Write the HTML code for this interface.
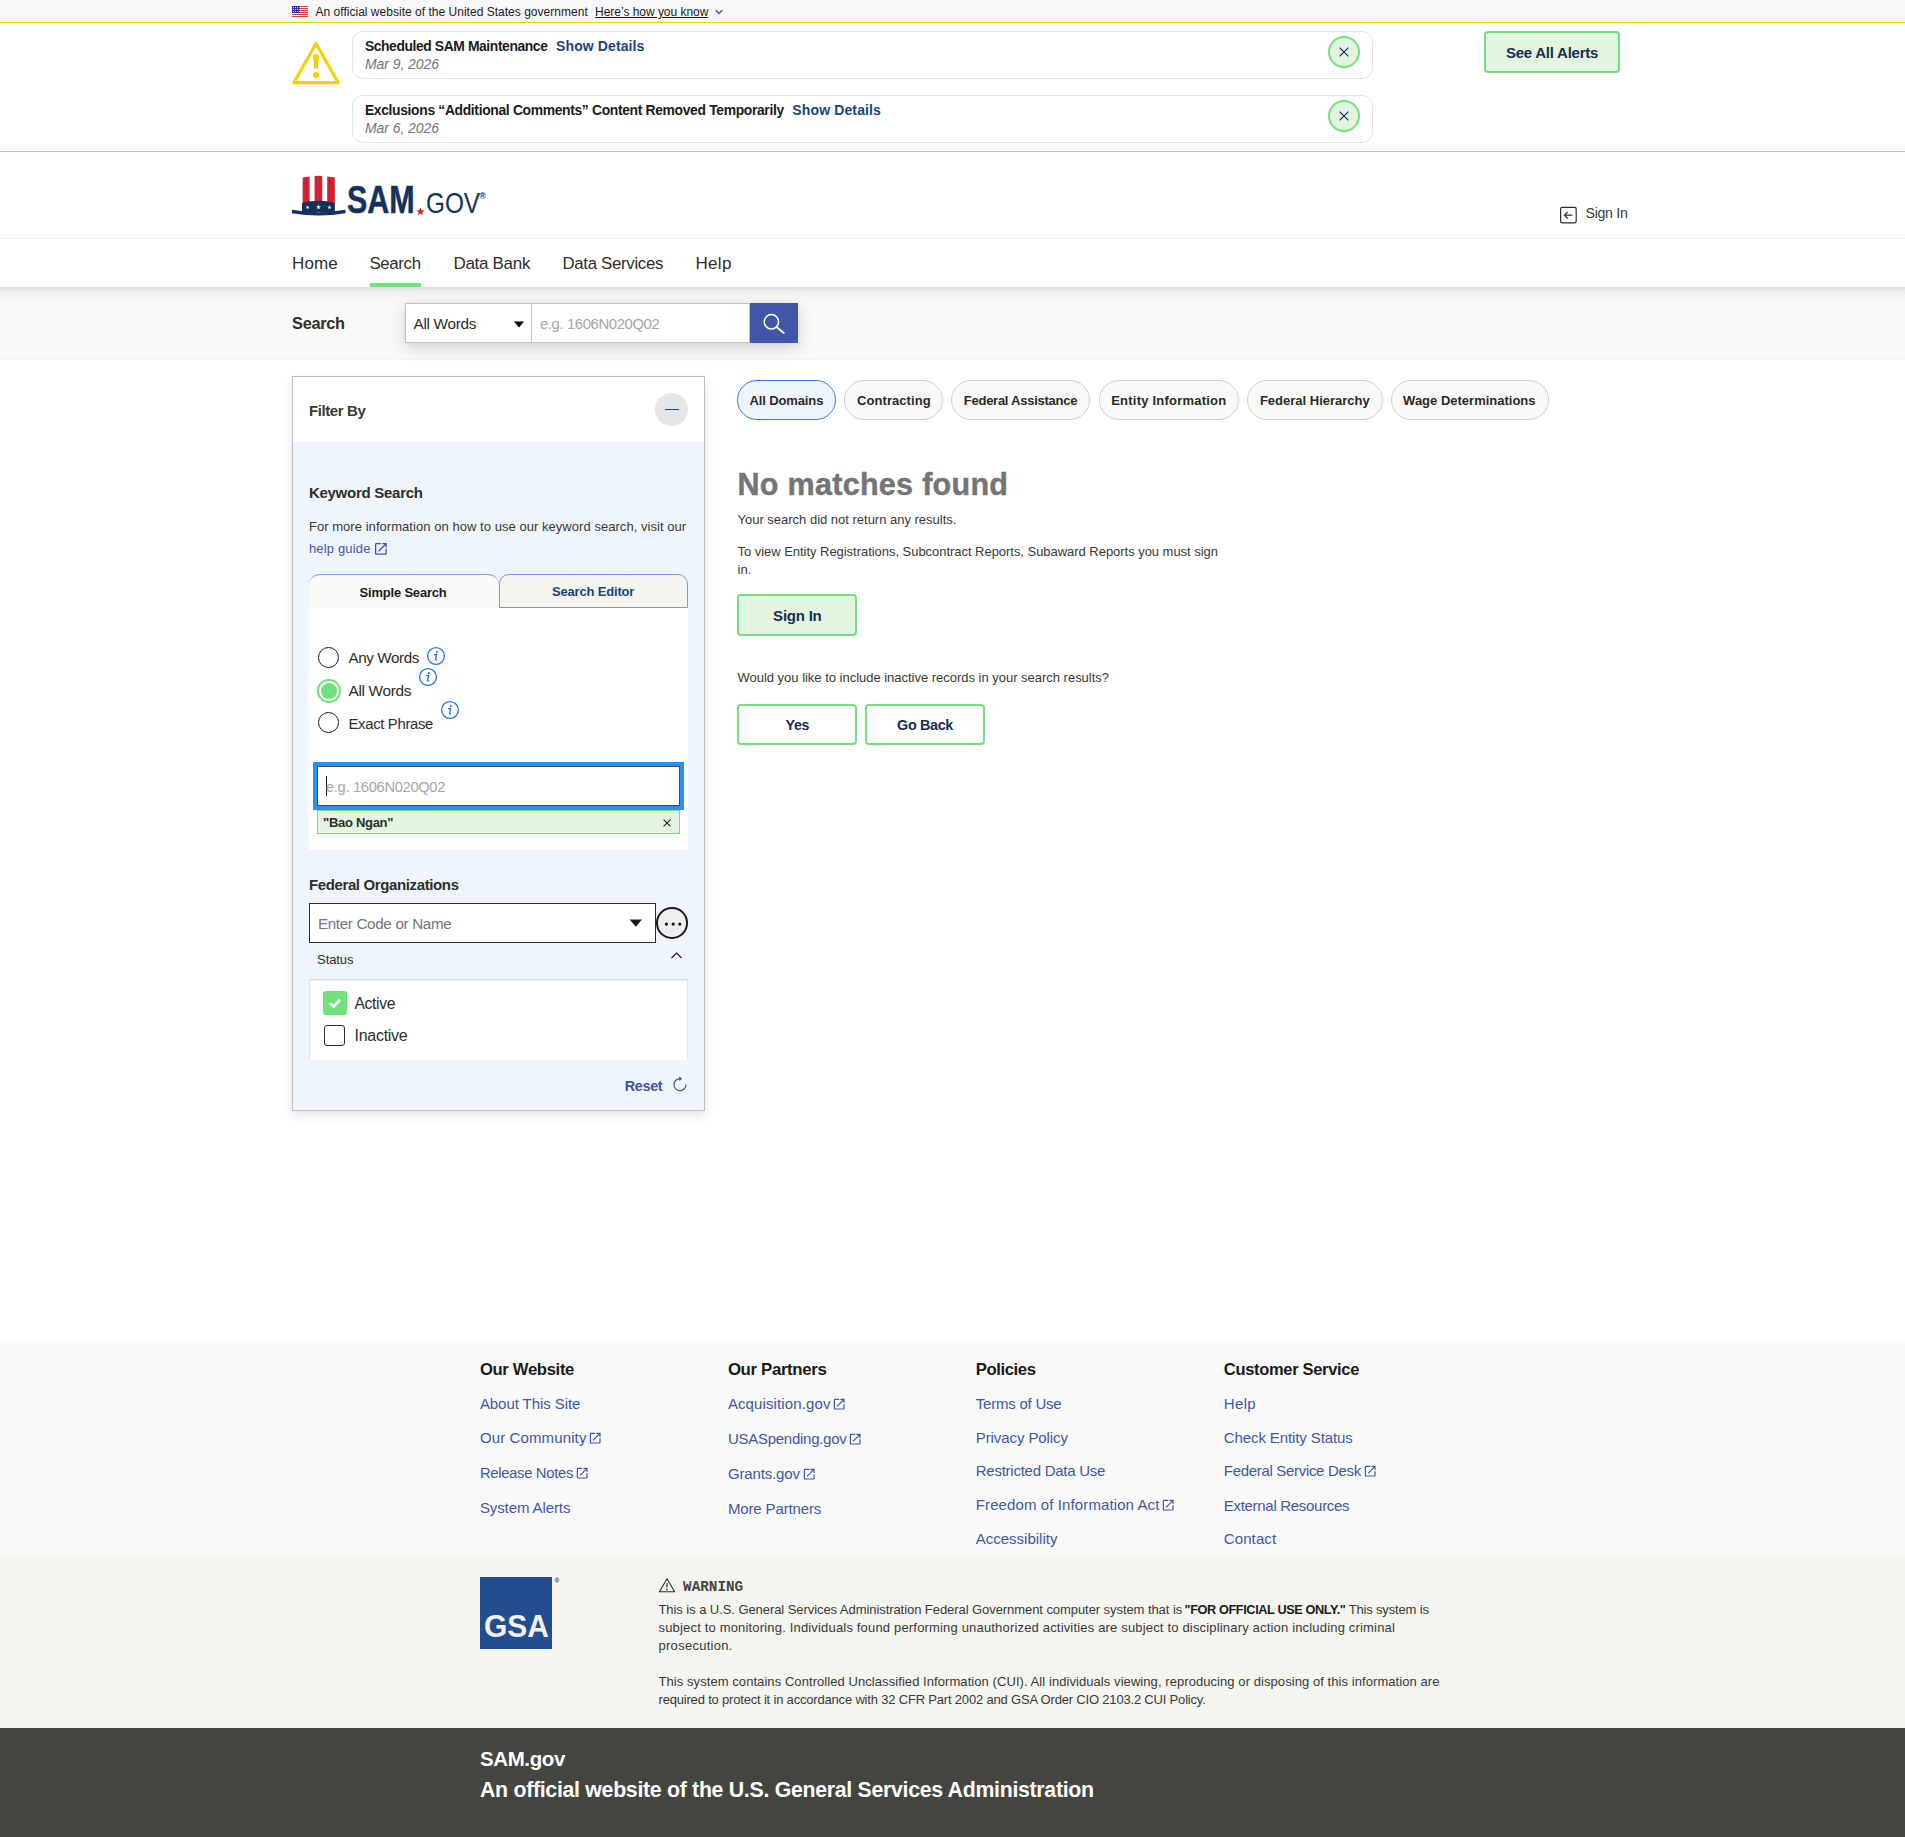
<!DOCTYPE html>
<html lang="en"><head><meta charset="utf-8"><title>SAM.gov | Search</title>
<style>
html,body{margin:0;padding:0;width:1905px;height:1837px}body{position:relative;overflow:hidden;background:#fff;font-family:"Liberation Sans",sans-serif}
.a{position:absolute;box-sizing:content-box}.t{position:absolute;white-space:nowrap;line-height:1;transform-origin:0 50%}
</style></head>
<body>
<div class="a" style="left:0;top:0;width:1905px;height:22px;background:#f9f9f7"></div>
<div class="a" style="left:0;top:22px;width:1905px;height:1px;background:#fdc70c"></div>
<svg class="a" style="left:292px;top:6px" width="16" height="11" viewBox="0 0 16 11" shape-rendering="crispEdges"><rect width="16" height="11" fill="#fff"/><rect y="0" width="16" height="1" fill="#db3e1f"/><rect y="2" width="16" height="1" fill="#db3e1f"/><rect y="4" width="16" height="1" fill="#db3e1f"/><rect y="6" width="16" height="1" fill="#db3e1f"/><rect y="8" width="16" height="1" fill="#db3e1f"/><rect y="10" width="16" height="1" fill="#db3e1f"/><rect width="8" height="7" fill="#1e33b1"/><rect x="1" y="1" width="1" height="1" fill="#cfd4f0"/><rect x="3" y="1" width="1" height="1" fill="#cfd4f0"/><rect x="5" y="1" width="1" height="1" fill="#cfd4f0"/><rect x="7" y="1" width="1" height="1" fill="#cfd4f0"/><rect x="1" y="3" width="1" height="1" fill="#cfd4f0"/><rect x="3" y="3" width="1" height="1" fill="#cfd4f0"/><rect x="5" y="3" width="1" height="1" fill="#cfd4f0"/><rect x="7" y="3" width="1" height="1" fill="#cfd4f0"/><rect x="1" y="5" width="1" height="1" fill="#cfd4f0"/><rect x="3" y="5" width="1" height="1" fill="#cfd4f0"/><rect x="5" y="5" width="1" height="1" fill="#cfd4f0"/><rect x="7" y="5" width="1" height="1" fill="#cfd4f0"/></svg>
<span class="t" style="left:315.5px;top:6.00px;font-family:'Liberation Sans',sans-serif;font-size:12px;font-weight:400;color:#1b1b1b;letter-spacing:0.019px;">An official website of the United States government</span>
<span class="t" style="left:595.1px;top:6.00px;font-family:'Liberation Sans',sans-serif;font-size:12px;font-weight:400;color:#1b1b1b;text-decoration:underline;letter-spacing:-0.030px;">Here’s how you know</span>
<svg class="a" style="left:714px;top:8px" width="10" height="8" viewBox="0 0 10 8"><path d="M1.8 2.2 L5 5.4 L8.2 2.2" fill="none" stroke="#3f57a6" stroke-width="1.4"/></svg>
<div class="a" style="left:0;top:151px;width:1905px;height:1px;background:#fdc70c"></div>
<svg class="a" style="left:290px;top:40px" width="52" height="46" viewBox="0 0 52 46"><path d="M26 3.4 L48.2 42.6 L3.8 42.6 Z" fill="none" stroke="#face00" stroke-width="3.1" stroke-linejoin="round"/><path d="M23 16.6 Q23 14.1 26 14.1 Q29 14.1 29 16.6 L27.8 27.6 Q27.7 29.3 26 29.3 Q24.3 29.3 24.2 27.6 Z" fill="#face00"/><circle cx="26" cy="35" r="3.05" fill="#face00"/></svg>
<div class="a" style="left:352px;top:31px;width:1019px;height:46px;border:1px solid #e4e4e4;border-radius:11px;background:#fff"></div>
<span class="t" style="left:364.9px;top:40.00px;font-family:'Liberation Sans',sans-serif;font-size:13.86px;font-weight:700;color:#1b1b1b;letter-spacing:-0.397px;">Scheduled SAM Maintenance</span>
<span class="t" style="left:556.1px;top:39.00px;font-family:'Liberation Sans',sans-serif;font-size:14px;font-weight:700;color:#1a4480;letter-spacing:0.105px;">Show Details</span>
<span class="t" style="left:364.9px;top:57.00px;font-family:'Liberation Sans',sans-serif;font-size:14px;font-weight:400;color:#71767a;font-style:italic;letter-spacing:-0.052px;">Mar 9, 2026</span>
<div class="a" style="left:1328px;top:36px;width:28px;height:28px;border:2px solid #70e17b;border-radius:50%;background:#e3f5e1"></div>
<svg class="a" style="left:1338px;top:46px" width="12" height="12" viewBox="0 0 12 12"><path d="M1.6 1.6 L10.4 10.4 M10.4 1.6 L1.6 10.4" stroke="#162e51" stroke-width="1.2" fill="none"/></svg>
<div class="a" style="left:352px;top:95px;width:1019px;height:46px;border:1px solid #e4e4e4;border-radius:11px;background:#fff"></div>
<span class="t" style="left:364.9px;top:104.00px;font-family:'Liberation Sans',sans-serif;font-size:13.86px;font-weight:700;color:#1b1b1b;letter-spacing:-0.329px;">Exclusions “Additional Comments” Content Removed Temporarily</span>
<span class="t" style="left:792.3px;top:103.00px;font-family:'Liberation Sans',sans-serif;font-size:14px;font-weight:700;color:#1a4480;letter-spacing:0.133px;">Show Details</span>
<span class="t" style="left:364.9px;top:121.00px;font-family:'Liberation Sans',sans-serif;font-size:14px;font-weight:400;color:#71767a;font-style:italic;letter-spacing:-0.052px;">Mar 6, 2026</span>
<div class="a" style="left:1328px;top:100px;width:28px;height:28px;border:2px solid #70e17b;border-radius:50%;background:#e3f5e1"></div>
<svg class="a" style="left:1338px;top:110px" width="12" height="12" viewBox="0 0 12 12"><path d="M1.6 1.6 L10.4 10.4 M10.4 1.6 L1.6 10.4" stroke="#162e51" stroke-width="1.2" fill="none"/></svg>
<div class="a" style="left:1484px;top:31px;width:132px;height:38px;border:2px solid #70e17b;border-radius:4px;background:#e3f5e1"></div>
<span class="t" style="left:1505.9px;top:45.00px;font-family:'Liberation Sans',sans-serif;font-size:15px;font-weight:700;color:#162e51;letter-spacing:-0.239px;">See All Alerts</span>
<div class="a" style="left:0;top:238px;width:1905px;height:1px;background:#f0f0ec"></div>
<svg class="a" style="left:290px;top:174px" width="58" height="44" viewBox="0 0 58 44"><path d="M12.7 3.6 Q16 2.9 19.6 2.6 L19.6 29 L12.7 29 Z" fill="#d2202f"/><path d="M24.6 1.9 Q28.4 1.6 32.2 1.9 L32.2 29 L24.6 29 Z" fill="#d2202f"/><path d="M37.2 2.6 Q41 2.9 44.8 3.6 L44.8 29 L37.2 29 Z" fill="#d2202f"/><path d="M12 28.9 Q28.4 24.7 44.9 28.9 L44.9 38 L12 38 Z" fill="#14315c"/><polygon transform="translate(17.6,33.4) scale(0.95)" points="0,-2.2 0.55,-0.7 2.1,-0.68 0.88,0.27 1.3,1.78 0,0.9 -1.3,1.78 -0.88,0.27 -2.1,-0.68 -0.55,-0.7" fill="#fff"/><polygon transform="translate(28.5,33.1) scale(1.15)" points="0,-2.2 0.55,-0.7 2.1,-0.68 0.88,0.27 1.3,1.78 0,0.9 -1.3,1.78 -0.88,0.27 -2.1,-0.68 -0.55,-0.7" fill="#fff"/><polygon transform="translate(39.4,33.4) scale(0.95)" points="0,-2.2 0.55,-0.7 2.1,-0.68 0.88,0.27 1.3,1.78 0,0.9 -1.3,1.78 -0.88,0.27 -2.1,-0.68 -0.55,-0.7" fill="#fff"/><path d="M2 35.7 Q28.5 40.6 55.5 35.7 L55.5 39.2 Q28.5 43.8 2 39.2 Z" fill="#14315c"/></svg>
<span class="t" style="left:346.5px;top:181.00px;font-family:'Liberation Sans',sans-serif;font-size:38.3px;font-weight:700;color:#14315c;-webkit-text-stroke:0.5px #14315c;transform:scaleX(0.7946);">SAM</span>
<svg class="a" style="left:415.5px;top:206.5px" width="9" height="9" viewBox="-2.3 -2.4 4.6 4.6"><polygon points="0,-2.2 0.55,-0.7 2.1,-0.68 0.88,0.27 1.3,1.78 0,0.9 -1.3,1.78 -0.88,0.27 -2.1,-0.68 -0.55,-0.7" fill="#d2202f"/></svg>
<span class="t" style="left:425.5px;top:188.00px;font-family:'Liberation Sans',sans-serif;font-size:29.3px;font-weight:400;color:#14315c;transform:scaleX(0.8301);">GOV</span>
<span class="t" style="left:479.5px;top:192.00px;font-family:'Liberation Sans',sans-serif;font-size:8.5px;font-weight:700;color:#14315c;">®</span>
<svg class="a" style="left:1559px;top:205.5px" width="19" height="18" viewBox="0 0 19 18"><rect x="1.6" y="1.4" width="15.6" height="15.4" rx="1.6" fill="none" stroke="#2e2e2a" stroke-width="1.2"/><path d="M13.4 9.2 H5.6 M8.8 5.9 L5.5 9.2 L8.8 12.5" fill="none" stroke="#2e2e2a" stroke-width="1.2"/></svg>
<span class="t" style="left:1585.5px;top:206.00px;font-family:'Liberation Sans',sans-serif;font-size:14.24px;font-weight:400;color:#393935;letter-spacing:-0.322px;">Sign In</span>
<span class="t" style="left:292.1px;top:255.00px;font-family:'Liberation Sans',sans-serif;font-size:17px;font-weight:400;color:#2e2e2a;letter-spacing:0.114px;">Home</span>
<span class="t" style="left:369.5px;top:256.00px;font-family:'Liberation Sans',sans-serif;font-size:16.83px;font-weight:400;color:#2e2e2a;letter-spacing:-0.367px;">Search</span>
<span class="t" style="left:453.5px;top:255.00px;font-family:'Liberation Sans',sans-serif;font-size:17px;font-weight:400;color:#2e2e2a;letter-spacing:-0.311px;">Data Bank</span>
<span class="t" style="left:562.5px;top:256.00px;font-family:'Liberation Sans',sans-serif;font-size:16.83px;font-weight:400;color:#2e2e2a;letter-spacing:-0.322px;">Data Services</span>
<span class="t" style="left:695.5px;top:255.00px;font-family:'Liberation Sans',sans-serif;font-size:17px;font-weight:400;color:#2e2e2a;letter-spacing:0.310px;">Help</span>
<div class="a" style="left:370px;top:283px;width:51px;height:4px;background:#70e17b"></div>
<div class="a" style="left:0;top:287px;width:1905px;height:72px;background:linear-gradient(#dcdcda 0px,#ececea 4px,#f6f6f4 10px,#f9f9f7 16px)"></div>
<div class="a" style="left:0;top:359px;width:1905px;height:1px;background:#f3f3f0"></div>
<span class="t" style="left:292.1px;top:315.00px;font-family:'Liberation Sans',sans-serif;font-size:16.32px;font-weight:700;color:#2e2e2a;letter-spacing:-0.307px;">Search</span>
<div class="a" style="left:405px;top:303px;width:393px;height:40px;box-shadow:0 5px 16px rgba(0,0,0,.15),0 0 4px rgba(0,0,0,.07)"></div>
<div class="a" style="left:405px;top:303px;width:125px;height:38px;border:1px solid #c6c6c6;background:#fff"></div>
<div class="a" style="left:532px;top:303px;width:217px;height:38px;border:1px solid #c6c6c6;border-left:0;background:#fff"></div>
<span class="t" style="left:413.5px;top:316.00px;font-family:'Liberation Sans',sans-serif;font-size:15.36px;font-weight:400;color:#2e2e2a;letter-spacing:-0.318px;">All Words</span>
<svg class="a" style="left:514px;top:321px" width="10" height="7" viewBox="0 0 10 7"><path d="M0 0.4 H10 L5 6.6 Z" fill="#000"/></svg>
<span class="t" style="left:539.9px;top:317.00px;font-family:'Liberation Sans',sans-serif;font-size:14.88px;font-weight:400;color:#a3a7aa;letter-spacing:-0.390px;">e.g. 1606N020Q02</span>
<div class="a" style="left:750px;top:303px;width:48px;height:40px;background:#3f57a6"></div>
<svg class="a" style="left:760px;top:311px" width="28" height="26" viewBox="0 0 28 26"><circle cx="11.4" cy="10.8" r="7.2" fill="none" stroke="#fff" stroke-width="1.5"/><path d="M16.6 16 L23.8 22" stroke="#fff" stroke-width="1.9" stroke-linecap="round"/></svg>
<div class="a" style="left:292px;top:376px;width:411px;height:733px;border:1px solid #bdbfc1;background:#eff6fb;box-shadow:0 4px 10px rgba(0,0,0,.115)"></div>
<div class="a" style="left:293px;top:377px;width:411px;height:65px;background:#fff"></div>
<span class="t" style="left:308.9px;top:403.00px;font-family:'Liberation Sans',sans-serif;font-size:15px;font-weight:700;color:#393935;letter-spacing:-0.389px;">Filter By</span>
<div class="a" style="left:655px;top:393px;width:33px;height:33px;border-radius:50%;background:#e6e6e6"></div>
<div class="a" style="left:665px;top:408.6px;width:14px;height:1.6px;background:#1a4480"></div>
<span class="t" style="left:308.9px;top:485.00px;font-family:'Liberation Sans',sans-serif;font-size:15px;font-weight:700;color:#2e2e2a;letter-spacing:-0.265px;">Keyword Search</span>
<span class="t" style="left:308.9px;top:520.00px;font-family:'Liberation Sans',sans-serif;font-size:13px;font-weight:400;color:#393935;letter-spacing:0.048px;">For more information on how to use our keyword search, visit our</span>
<span class="t" style="left:308.9px;top:542.00px;font-family:'Liberation Sans',sans-serif;font-size:13px;font-weight:400;color:#3f57a6;letter-spacing:0.167px;">help guide</span>
<svg class="a" style="left:372.63px;top:540.93px" width="15.73" height="15.73" viewBox="0 0 24 24" fill="#3f57a6"><path d="M19 19H5V5h7V3H5a2 2 0 0 0-2 2v14a2 2 0 0 0 2 2h14c1.1 0 2-.9 2-2v-7h-2v7zM14 3v2h3.59l-9.83 9.83 1.41 1.41L19 6.41V10h2V3h-7z"/></svg>
<div class="a" style="left:309px;top:574px;width:190px;height:34px;background:#f9f9f7;border-top:1px solid #73a5f0;border-radius:11px 11px 0 0;box-sizing:border-box"></div>
<div class="a" style="left:498.5px;top:574px;width:189.5px;height:34px;background:#f5f5f0;border:1px solid #6f9cf2;border-radius:10px 10px 0 0;box-sizing:border-box"></div>
<span class="t" style="left:359.5px;top:586.00px;font-family:'Liberation Sans',sans-serif;font-size:13px;font-weight:700;color:#1b1b1b;letter-spacing:-0.192px;">Simple Search</span>
<span class="t" style="left:551.9px;top:585.00px;font-family:'Liberation Sans',sans-serif;font-size:13px;font-weight:700;color:#1a4480;letter-spacing:-0.169px;">Search Editor</span>
<div class="a" style="left:309px;top:608px;width:379px;height:242px;background:#fff"></div>
<div class="a" style="left:318.1px;top:647.0px;width:18.8px;height:18.8px;border-radius:50%;background:#fff;border:1.5px solid #1b1b1b"></div>
<span class="t" style="left:348.5px;top:650.00px;font-family:'Liberation Sans',sans-serif;font-size:15.2px;font-weight:400;color:#2e2e2a;letter-spacing:-0.394px;">Any Words</span>
<svg class="a" style="left:426px;top:646.4px" width="20" height="20" viewBox="0 0 20 20"><circle cx="10" cy="10" r="8.4" fill="none" stroke="#2672de" stroke-width="1.3"/><circle cx="10.9" cy="5.9" r="1" fill="#2672de"/><path d="M8.6 8.6 L10.6 8.3 L9.5 13.3 Q9.4 14.2 10.6 13.8" fill="none" stroke="#2672de" stroke-width="1.3" stroke-linecap="round" stroke-linejoin="round"/></svg>
<div class="a" style="left:319.2px;top:681.2px;width:15.4px;height:15.4px;border-radius:50%;background:#70e17b;border:2.1px solid #fff;box-shadow:0 0 0 2px #70e17b"></div>
<span class="t" style="left:348.5px;top:683.00px;font-family:'Liberation Sans',sans-serif;font-size:15.36px;font-weight:400;color:#2e2e2a;letter-spacing:-0.318px;">All Words</span>
<svg class="a" style="left:418px;top:667.2px" width="20" height="20" viewBox="0 0 20 20"><circle cx="10" cy="10" r="8.4" fill="none" stroke="#2672de" stroke-width="1.3"/><circle cx="10.9" cy="5.9" r="1" fill="#2672de"/><path d="M8.6 8.6 L10.6 8.3 L9.5 13.3 Q9.4 14.2 10.6 13.8" fill="none" stroke="#2672de" stroke-width="1.3" stroke-linecap="round" stroke-linejoin="round"/></svg>
<div class="a" style="left:318.1px;top:711.9px;width:18.8px;height:18.8px;border-radius:50%;background:#fff;border:1.5px solid #1b1b1b"></div>
<span class="t" style="left:348.5px;top:717.00px;font-family:'Liberation Sans',sans-serif;font-size:14.88px;font-weight:400;color:#2e2e2a;letter-spacing:-0.327px;">Exact Phrase</span>
<svg class="a" style="left:440px;top:700px" width="20" height="20" viewBox="0 0 20 20"><circle cx="10" cy="10" r="8.4" fill="none" stroke="#2672de" stroke-width="1.3"/><circle cx="10.9" cy="5.9" r="1" fill="#2672de"/><path d="M8.6 8.6 L10.6 8.3 L9.5 13.3 Q9.4 14.2 10.6 13.8" fill="none" stroke="#2672de" stroke-width="1.3" stroke-linecap="round" stroke-linejoin="round"/></svg>
<div class="a" style="left:313px;top:762px;width:371px;height:48px;background:#2491ff"></div>
<div class="a" style="left:317px;top:766px;width:361px;height:38px;border:1px solid #4b4843;background:#fff"></div>
<div class="a" style="left:326px;top:776px;width:1px;height:20px;background:#1b1b1b"></div>
<span class="t" style="left:326.0px;top:780.00px;font-family:'Liberation Sans',sans-serif;font-size:14.72px;font-weight:400;color:#a3a7aa;letter-spacing:-0.333px;">e.g. 1606N020Q02</span>
<div class="a" style="left:317px;top:810px;width:361px;height:22px;border:1px solid #70e17b;background:#e3f5e1"></div>
<span class="t" style="left:323.1px;top:816.00px;font-family:'Liberation Sans',sans-serif;font-size:13.02px;font-weight:700;color:#2e2e2a;letter-spacing:-0.313px;">"Bao Ngan"</span>
<svg class="a" style="left:662px;top:818px" width="10" height="10" viewBox="0 0 10 10"><path d="M1.6 1.6 L8.4 8.4 M8.4 1.6 L1.6 8.4" stroke="#1b1b1b" stroke-width="1.1"/></svg>
<span class="t" style="left:308.9px;top:877.00px;font-family:'Liberation Sans',sans-serif;font-size:15px;font-weight:700;color:#2e2e2a;letter-spacing:-0.372px;">Federal Organizations</span>
<div class="a" style="left:309px;top:903px;width:345px;height:38px;border:1px solid #2e2e2a;background:#fff"></div>
<span class="t" style="left:317.9px;top:916.00px;font-family:'Liberation Sans',sans-serif;font-size:15.2px;font-weight:400;color:#71767a;letter-spacing:-0.323px;">Enter Code or Name</span>
<svg class="a" style="left:629px;top:919px" width="14" height="9" viewBox="0 0 14 9"><path d="M0.6 0.4 H13 L6.8 7.8 Z" fill="#1b1b1b"/></svg>
<div class="a" style="left:656.4px;top:907px;width:27.6px;height:27.6px;border:2px solid #1b1b1b;border-radius:50%;background:#efefef"></div>
<svg class="a" style="left:663px;top:921px" width="20" height="6" viewBox="0 0 20 6"><circle cx="3.4" cy="3.1" r="1.65" fill="#1b1b1b"/><circle cx="10.2" cy="3.1" r="1.65" fill="#1b1b1b"/><circle cx="16.8" cy="3.1" r="1.65" fill="#1b1b1b"/></svg>
<span class="t" style="left:317.1px;top:953.00px;font-family:'Liberation Sans',sans-serif;font-size:13px;font-weight:400;color:#2e2e2a;letter-spacing:-0.112px;">Status</span>
<svg class="a" style="left:670px;top:951px" width="13" height="9" viewBox="0 0 13 9"><path d="M1.5 7 L6.5 2 L11.5 7" fill="none" stroke="#1b1b1b" stroke-width="1.2"/></svg>
<div class="a" style="left:309px;top:979px;height:80px;background:#fff;border-top:1px solid #d9dadb;border-left:1px solid #e3e7ea;border-right:1px solid #e3e7ea;width:377px;box-shadow:inset 0 2px 2px -1px rgba(0,0,0,.08)"></div>
<div class="a" style="left:323.3px;top:991.3px;width:23.5px;height:23.5px;border-radius:3px;background:#70e17b"></div>
<svg class="a" style="left:327px;top:996px" width="16" height="14" viewBox="0 0 16 14"><path d="M3 7.2 L6.6 10.6 L13 3.6" fill="none" stroke="#fff" stroke-width="2.6"/></svg>
<span class="t" style="left:354.5px;top:996.00px;font-family:'Liberation Sans',sans-serif;font-size:15.68px;font-weight:400;color:#2e2e2a;letter-spacing:-0.361px;">Active</span>
<div class="a" style="left:323.9px;top:1025px;width:19px;height:18.7px;border:1.5px solid #2e2e2a;border-radius:3px;background:#fff"></div>
<span class="t" style="left:354.5px;top:1028.00px;font-family:'Liberation Sans',sans-serif;font-size:16px;font-weight:400;color:#2e2e2a;letter-spacing:-0.277px;">Inactive</span>
<span class="t" style="left:624.8px;top:1079.00px;font-family:'Liberation Sans',sans-serif;font-size:14.41px;font-weight:700;color:#3f57a6;letter-spacing:-0.366px;">Reset</span>
<svg class="a" style="left:671px;top:1075px" width="18" height="18" viewBox="0 0 18 18"><path d="M9.2 3.6 A6 6 0 1 0 15 9.4" fill="none" stroke="#3f57a6" stroke-width="1.2"/><path d="M8.2 1.2 L11.2 3.7 L8.2 6.1 Z" fill="#3f57a6"/></svg>
<div class="a" style="left:737px;top:380px;width:97px;height:38px;border:1px solid #3a7ae4;border-radius:20px;background:#eff6fb"></div>
<span class="t" style="left:749.5px;top:394.00px;font-family:'Liberation Sans',sans-serif;font-size:13px;font-weight:700;color:#2a2a26;letter-spacing:-0.122px;">All Domains</span>
<div class="a" style="left:844px;top:380px;width:96.60000000000002px;height:38px;border:1px solid #cfcfcf;border-radius:20px;background:#f9f9f7"></div>
<span class="t" style="left:857.1px;top:394.00px;font-family:'Liberation Sans',sans-serif;font-size:13px;font-weight:700;color:#2a2a26;letter-spacing:0.055px;">Contracting</span>
<div class="a" style="left:951px;top:380px;width:137.4000000000001px;height:38px;border:1px solid #cfcfcf;border-radius:20px;background:#f9f9f7"></div>
<span class="t" style="left:963.8px;top:394.00px;font-family:'Liberation Sans',sans-serif;font-size:13px;font-weight:700;color:#2a2a26;letter-spacing:-0.261px;">Federal Assistance</span>
<div class="a" style="left:1098.8px;top:380px;width:137.9000000000001px;height:38px;border:1px solid #cfcfcf;border-radius:20px;background:#f9f9f7"></div>
<span class="t" style="left:1111.2px;top:394.00px;font-family:'Liberation Sans',sans-serif;font-size:13px;font-weight:700;color:#2a2a26;letter-spacing:0.222px;">Entity Information</span>
<div class="a" style="left:1247px;top:380px;width:133.79999999999995px;height:38px;border:1px solid #cfcfcf;border-radius:20px;background:#f9f9f7"></div>
<span class="t" style="left:1259.9px;top:394.00px;font-family:'Liberation Sans',sans-serif;font-size:13px;font-weight:700;color:#2a2a26;">Federal Hierarchy</span>
<div class="a" style="left:1390.7px;top:380px;width:155.89999999999986px;height:38px;border:1px solid #cfcfcf;border-radius:20px;background:#f9f9f7"></div>
<span class="t" style="left:1403.1px;top:394.00px;font-family:'Liberation Sans',sans-serif;font-size:13px;font-weight:700;color:#2a2a26;">Wage Determinations</span>
<span class="t" style="left:737.5px;top:469.00px;font-family:'Liberation Sans',sans-serif;font-size:30.5px;font-weight:700;color:#757575;-webkit-text-stroke:0.45px #757575;letter-spacing:0.297px;">No matches found</span>
<span class="t" style="left:737.5px;top:513.00px;font-family:'Liberation Sans',sans-serif;font-size:13px;font-weight:400;color:#393935;letter-spacing:-0.008px;">Your search did not return any results.</span>
<span class="t" style="left:737.5px;top:545.00px;font-family:'Liberation Sans',sans-serif;font-size:13px;font-weight:400;color:#393935;letter-spacing:-0.037px;">To view Entity Registrations, Subcontract Reports, Subaward Reports you must sign</span>
<span class="t" style="left:737.5px;top:563.00px;font-family:'Liberation Sans',sans-serif;font-size:13px;font-weight:400;color:#393935;letter-spacing:0.083px;">in.</span>
<div class="a" style="left:737px;top:594px;width:116px;height:38px;border:2px solid #70e17b;border-radius:4px;background:#e3f5e1"></div>
<span class="t" style="left:773.1px;top:608.00px;font-family:'Liberation Sans',sans-serif;font-size:15px;font-weight:700;color:#162e51;letter-spacing:-0.217px;">Sign In</span>
<span class="t" style="left:737.5px;top:671.00px;font-family:'Liberation Sans',sans-serif;font-size:13px;font-weight:400;color:#393935;letter-spacing:-0.017px;">Would you like to include inactive records in your search results?</span>
<div class="a" style="left:737px;top:704px;width:116px;height:36.6px;border:2px solid #70e17b;border-radius:4px;background:#fff"></div>
<span class="t" style="left:785.5px;top:718.00px;font-family:'Liberation Sans',sans-serif;font-size:14.25px;font-weight:700;color:#162e51;letter-spacing:-0.341px;">Yes</span>
<div class="a" style="left:865px;top:704px;width:116px;height:36.6px;border:2px solid #70e17b;border-radius:4px;background:#fff"></div>
<span class="t" style="left:897.1px;top:718.00px;font-family:'Liberation Sans',sans-serif;font-size:14.4px;font-weight:700;color:#162e51;letter-spacing:-0.354px;">Go Back</span>
<div class="a" style="left:0;top:1343px;width:1905px;height:214px;background:#f9f9f7"></div>
<div class="a" style="left:0;top:1557px;width:1905px;height:171px;background:#f5f5f0"></div>
<div class="a" style="left:0;top:1728px;width:1905px;height:109px;background:#454540"></div>
<span class="t" style="left:479.9px;top:1362.00px;font-family:'Liberation Sans',sans-serif;font-size:16.66px;font-weight:700;color:#1b1b1b;letter-spacing:-0.333px;">Our Website</span>
<span class="t" style="left:727.9px;top:1362.00px;font-family:'Liberation Sans',sans-serif;font-size:16.83px;font-weight:700;color:#1b1b1b;letter-spacing:-0.363px;">Our Partners</span>
<span class="t" style="left:975.8px;top:1362.00px;font-family:'Liberation Sans',sans-serif;font-size:16.66px;font-weight:700;color:#1b1b1b;letter-spacing:-0.397px;">Policies</span>
<span class="t" style="left:1223.8px;top:1361.00px;font-family:'Liberation Sans',sans-serif;font-size:16.49px;font-weight:700;color:#1b1b1b;letter-spacing:-0.309px;">Customer Service</span>
<span class="t" style="left:479.9px;top:1396.00px;font-family:'Liberation Sans',sans-serif;font-size:15px;font-weight:400;color:#3f57a6;letter-spacing:-0.068px;">About This Site</span>
<span class="t" style="left:479.9px;top:1430.00px;font-family:'Liberation Sans',sans-serif;font-size:15px;font-weight:400;color:#3f57a6;letter-spacing:0.122px;">Our Community</span>
<svg class="a" style="left:588.0px;top:1431.0px" width="14.4" height="14.4" viewBox="0 0 24 24" fill="#3f57a6"><path d="M19 19H5V5h7V3H5a2 2 0 0 0-2 2v14a2 2 0 0 0 2 2h14c1.1 0 2-.9 2-2v-7h-2v7zM14 3v2h3.59l-9.83 9.83 1.41 1.41L19 6.41V10h2V3h-7z"/></svg>
<span class="t" style="left:479.9px;top:1466.00px;font-family:'Liberation Sans',sans-serif;font-size:14.85px;font-weight:400;color:#3f57a6;letter-spacing:-0.326px;">Release Notes</span>
<svg class="a" style="left:575.0px;top:1466.0px" width="14.4" height="14.4" viewBox="0 0 24 24" fill="#3f57a6"><path d="M19 19H5V5h7V3H5a2 2 0 0 0-2 2v14a2 2 0 0 0 2 2h14c1.1 0 2-.9 2-2v-7h-2v7zM14 3v2h3.59l-9.83 9.83 1.41 1.41L19 6.41V10h2V3h-7z"/></svg>
<span class="t" style="left:479.9px;top:1500.00px;font-family:'Liberation Sans',sans-serif;font-size:15px;font-weight:400;color:#3f57a6;letter-spacing:-0.100px;">System Alerts</span>
<span class="t" style="left:727.9px;top:1396.00px;font-family:'Liberation Sans',sans-serif;font-size:15px;font-weight:400;color:#3f57a6;letter-spacing:0.114px;">Acquisition.gov</span>
<svg class="a" style="left:832.0px;top:1397.0px" width="14.4" height="14.4" viewBox="0 0 24 24" fill="#3f57a6"><path d="M19 19H5V5h7V3H5a2 2 0 0 0-2 2v14a2 2 0 0 0 2 2h14c1.1 0 2-.9 2-2v-7h-2v7zM14 3v2h3.59l-9.83 9.83 1.41 1.41L19 6.41V10h2V3h-7z"/></svg>
<span class="t" style="left:727.9px;top:1431.00px;font-family:'Liberation Sans',sans-serif;font-size:15px;font-weight:400;color:#3f57a6;letter-spacing:-0.264px;">USASpending.gov</span>
<svg class="a" style="left:848.4px;top:1432.0px" width="14.4" height="14.4" viewBox="0 0 24 24" fill="#3f57a6"><path d="M19 19H5V5h7V3H5a2 2 0 0 0-2 2v14a2 2 0 0 0 2 2h14c1.1 0 2-.9 2-2v-7h-2v7zM14 3v2h3.59l-9.83 9.83 1.41 1.41L19 6.41V10h2V3h-7z"/></svg>
<span class="t" style="left:727.9px;top:1466.00px;font-family:'Liberation Sans',sans-serif;font-size:15px;font-weight:400;color:#3f57a6;letter-spacing:-0.142px;">Grants.gov</span>
<svg class="a" style="left:801.6px;top:1467.0px" width="14.4" height="14.4" viewBox="0 0 24 24" fill="#3f57a6"><path d="M19 19H5V5h7V3H5a2 2 0 0 0-2 2v14a2 2 0 0 0 2 2h14c1.1 0 2-.9 2-2v-7h-2v7zM14 3v2h3.59l-9.83 9.83 1.41 1.41L19 6.41V10h2V3h-7z"/></svg>
<span class="t" style="left:727.9px;top:1501.00px;font-family:'Liberation Sans',sans-serif;font-size:15px;font-weight:400;color:#3f57a6;letter-spacing:-0.129px;">More Partners</span>
<span class="t" style="left:975.8px;top:1396.00px;font-family:'Liberation Sans',sans-serif;font-size:15px;font-weight:400;color:#3f57a6;letter-spacing:-0.224px;">Terms of Use</span>
<span class="t" style="left:975.8px;top:1430.00px;font-family:'Liberation Sans',sans-serif;font-size:15px;font-weight:400;color:#3f57a6;letter-spacing:-0.089px;">Privacy Policy</span>
<span class="t" style="left:975.8px;top:1463.00px;font-family:'Liberation Sans',sans-serif;font-size:15px;font-weight:400;color:#3f57a6;letter-spacing:-0.257px;">Restricted Data Use</span>
<span class="t" style="left:975.8px;top:1497.00px;font-family:'Liberation Sans',sans-serif;font-size:15px;font-weight:400;color:#3f57a6;letter-spacing:0.107px;">Freedom of Information Act</span>
<svg class="a" style="left:1161.0px;top:1498.0px" width="14.4" height="14.4" viewBox="0 0 24 24" fill="#3f57a6"><path d="M19 19H5V5h7V3H5a2 2 0 0 0-2 2v14a2 2 0 0 0 2 2h14c1.1 0 2-.9 2-2v-7h-2v7zM14 3v2h3.59l-9.83 9.83 1.41 1.41L19 6.41V10h2V3h-7z"/></svg>
<span class="t" style="left:975.8px;top:1531.00px;font-family:'Liberation Sans',sans-serif;font-size:15px;font-weight:400;color:#3f57a6;letter-spacing:-0.007px;">Accessibility</span>
<span class="t" style="left:1223.8px;top:1396.00px;font-family:'Liberation Sans',sans-serif;font-size:15px;font-weight:400;color:#3f57a6;letter-spacing:0.347px;">Help</span>
<span class="t" style="left:1223.8px;top:1430.00px;font-family:'Liberation Sans',sans-serif;font-size:15px;font-weight:400;color:#3f57a6;letter-spacing:-0.106px;">Check Entity Status</span>
<span class="t" style="left:1223.8px;top:1463.00px;font-family:'Liberation Sans',sans-serif;font-size:15px;font-weight:400;color:#3f57a6;letter-spacing:-0.315px;">Federal Service Desk</span>
<svg class="a" style="left:1362.8px;top:1464.0px" width="14.4" height="14.4" viewBox="0 0 24 24" fill="#3f57a6"><path d="M19 19H5V5h7V3H5a2 2 0 0 0-2 2v14a2 2 0 0 0 2 2h14c1.1 0 2-.9 2-2v-7h-2v7zM14 3v2h3.59l-9.83 9.83 1.41 1.41L19 6.41V10h2V3h-7z"/></svg>
<span class="t" style="left:1223.8px;top:1498.00px;font-family:'Liberation Sans',sans-serif;font-size:15px;font-weight:400;color:#3f57a6;letter-spacing:-0.300px;">External Resources</span>
<span class="t" style="left:1223.8px;top:1531.00px;font-family:'Liberation Sans',sans-serif;font-size:15px;font-weight:400;color:#3f57a6;letter-spacing:0.099px;">Contact</span>
<div class="a" style="left:480px;top:1577px;width:72px;height:72px;background:#234d91"></div>
<span class="t" style="left:483.9px;top:1610.00px;font-family:'Liberation Sans',sans-serif;font-size:32px;font-weight:700;color:#f4f3ee;transform:scaleX(0.9344);">GSA</span>
<span class="t" style="left:554.5px;top:1578.00px;font-family:'Liberation Sans',sans-serif;font-size:6.5px;font-weight:700;color:#234d91;">®</span>
<svg class="a" style="left:658px;top:1576.5px" width="18" height="16" viewBox="0 0 18 16"><path d="M9 1.8 L16.6 14.8 L1.4 14.8 Z" fill="none" stroke="#2e2e2a" stroke-width="1.1" stroke-linejoin="round"/><path d="M9 6 V10.6" stroke="#2e2e2a" stroke-width="1.2"/><circle cx="9" cy="12.6" r="0.8" fill="#2e2e2a"/></svg>
<span class="t" style="left:683.1px;top:1580.00px;font-family:'Liberation Mono',monospace;font-size:14.3px;font-weight:700;color:#454540;letter-spacing:0.006px;">WARNING</span>
<span class="t" style="left:658.5px;top:1603.00px;font-family:'Liberation Sans',sans-serif;font-size:13px;font-weight:400;color:#393935;letter-spacing:-0.067px;">This is a U.S. General Services Administration Federal Government computer system that is</span>
<span class="t" style="left:1184.5px;top:1604.00px;font-family:'Liberation Sans',sans-serif;font-size:12.74px;font-weight:700;color:#1b1b1b;letter-spacing:-0.398px;">"FOR OFFICIAL USE ONLY."</span>
<span class="t" style="left:1348.7px;top:1603.00px;font-family:'Liberation Sans',sans-serif;font-size:13px;font-weight:400;color:#393935;letter-spacing:-0.165px;">This system is</span>
<span class="t" style="left:658.5px;top:1621.00px;font-family:'Liberation Sans',sans-serif;font-size:13px;font-weight:400;color:#393935;letter-spacing:0.175px;">subject to monitoring. Individuals found performing unauthorized activities are subject to disciplinary action including criminal</span>
<span class="t" style="left:658.5px;top:1639.00px;font-family:'Liberation Sans',sans-serif;font-size:13px;font-weight:400;color:#393935;letter-spacing:0.279px;">prosecution.</span>
<span class="t" style="left:658.5px;top:1675.00px;font-family:'Liberation Sans',sans-serif;font-size:13px;font-weight:400;color:#393935;letter-spacing:0.068px;">This system contains Controlled Unclassified Information (CUI). All individuals viewing, reproducing or disposing of this information are</span>
<span class="t" style="left:658.5px;top:1693.00px;font-family:'Liberation Sans',sans-serif;font-size:13px;font-weight:400;color:#393935;letter-spacing:-0.186px;">required to protect it in accordance with 32 CFR Part 2002 and GSA Order CIO 2103.2 CUI Policy.</span>
<span class="t" style="left:480.0px;top:1749.00px;font-family:'Liberation Sans',sans-serif;font-size:20.46px;font-weight:700;color:#fff;letter-spacing:-0.356px;">SAM.gov</span>
<span class="t" style="left:480.0px;top:1780.00px;font-family:'Liberation Sans',sans-serif;font-size:21.34px;font-weight:700;color:#fff;letter-spacing:-0.310px;">An official website of the U.S. General Services Administration</span>
</body></html>
